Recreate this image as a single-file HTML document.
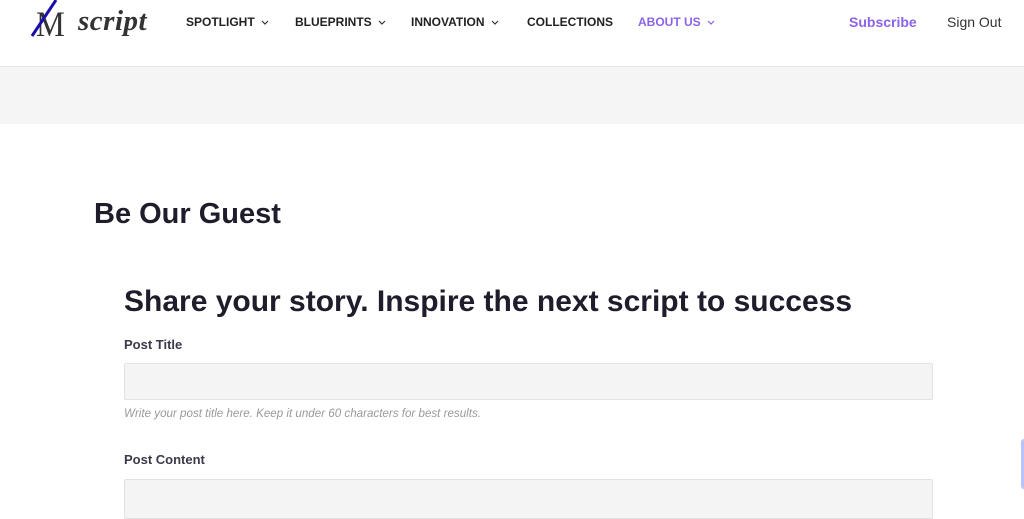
<!DOCTYPE html>
<html><head><meta charset="utf-8"><style>
*{margin:0;padding:0;box-sizing:border-box}
body{width:1024px;height:508px;overflow:hidden;background:#fff;font-family:"Liberation Sans",sans-serif;color:#222;position:relative}
.hdr{position:absolute;left:0;top:0;width:1024px;height:67px;border-bottom:1px solid #e6e6e6;background:#fff}
.band{position:absolute;left:0;top:67px;width:1024px;height:57px;background:#f5f5f5}
.nav{position:absolute;top:15px;font-size:12px;font-weight:bold;color:#222}
.nav svg{margin-left:6px;vertical-align:1px}
.logo{position:absolute;left:30px;top:0}
.script{position:absolute;left:78px;top:5px;font-family:"Liberation Serif",serif;font-style:italic;font-weight:bold;font-size:29px;color:#333;letter-spacing:0.5px}
.M{position:absolute;left:36px;top:6px;font-family:"Liberation Serif",serif;font-size:36px;line-height:36px;color:#333;transform:scaleX(0.9);transform-origin:left}
h1{position:absolute;left:94px;top:198px;font-size:29px;font-weight:bold;color:#1f1c2b}
h2{position:absolute;left:124px;top:285px;font-size:30px;font-weight:bold;color:#1f1c2b}
.lbl{position:absolute;left:124px;font-size:13px;font-weight:bold;color:#3a3a4a}
.inp{position:absolute;left:124px;width:809px;background:#f4f4f4;border:1px solid #e2e2e2;border-radius:2px}
.help{position:absolute;left:124px;top:407px;font-size:11.6px;font-style:italic;color:#9a9a9a}
</style></head><body>
<div class="hdr"></div>
<div class="band"></div>
<div class="M">M</div>
<svg class="logo" width="30" height="40" style="left:30px"><line x1="26" y1="0" x2="2" y2="36" stroke="#1a0fa8" stroke-width="3"/></svg>
<div class="script">script</div>
<div class="nav" style="left:186px">SPOTLIGHT<svg width="8" height="5"><path d="M1 1l3 3 3-3" stroke="#333" fill="none" stroke-width="1.2"/></svg></div>
<div class="nav" style="left:295px">BLUEPRINTS<svg width="8" height="5"><path d="M1 1l3 3 3-3" stroke="#333" fill="none" stroke-width="1.2"/></svg></div>
<div class="nav" style="left:411px">INNOVATION<svg width="8" height="5"><path d="M1 1l3 3 3-3" stroke="#333" fill="none" stroke-width="1.2"/></svg></div>
<div class="nav" style="left:527px">COLLECTIONS</div>
<div class="nav" style="left:638px;color:#8b63e8">ABOUT US<svg width="8" height="5"><path d="M1 1l3 3 3-3" stroke="#8b63e8" fill="none" stroke-width="1.2"/></svg></div>
<div style="position:absolute;left:849px;top:14px;font-size:14px;font-weight:bold;color:#8b63e8">Subscribe</div>
<div style="position:absolute;left:947px;top:14px;font-size:14px;color:#333">Sign Out</div>
<h1>Be Our Guest</h1>
<h2>Share your story. Inspire the next script to success</h2>
<div class="lbl" style="top:337px">Post Title</div>
<div class="inp" style="top:363px;height:37px"></div>
<div class="help">Write your post title here. Keep it under 60 characters for best results.</div>
<div class="lbl" style="top:452px">Post Content</div>
<div class="inp" style="top:479px;height:40px"></div>
<div style="position:absolute;left:1021px;top:439px;width:6px;height:50px;background:#b9c4ff;border-radius:3px"></div>
</body></html>
